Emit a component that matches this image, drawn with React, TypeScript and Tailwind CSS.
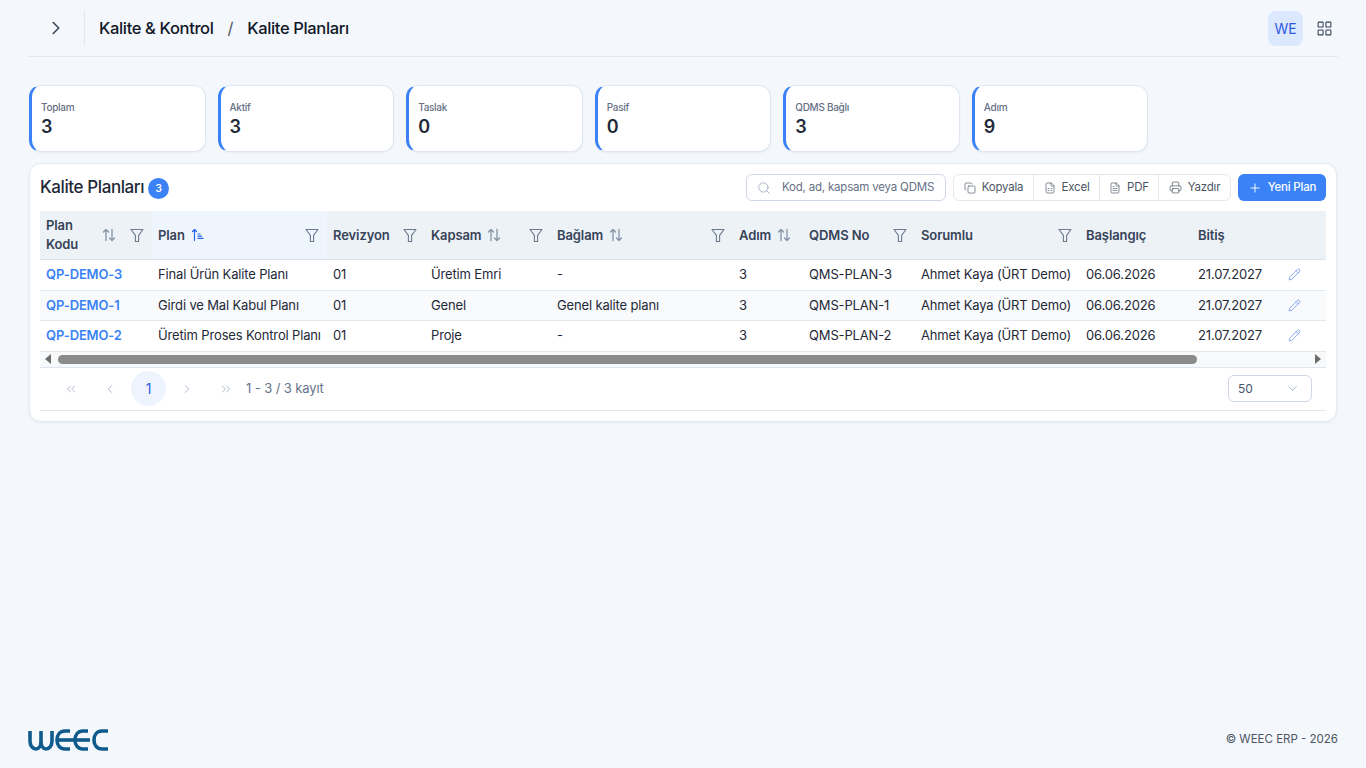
import React from "react";
import { ChevronRight, Copy, FileText, Printer, Plus, Search, ChevronsLeft, ChevronLeft, ChevronsRight, ChevronDown, LayoutGrid, Pencil, Funnel, ArrowUpDown, FileSpreadsheet } from "lucide-react";

const stats = [["Toplam", "3"], ["Aktif", "3"], ["Taslak", "0"], ["Pasif", "0"], ["QDMS Bağlı", "3"], ["Adım", "9"]];
const rows = [
  ["QP-DEMO-3", "Final Ürün Kalite Planı", "01", "Üretim Emri", "-", "3", "QMS-PLAN-3"],
  ["QP-DEMO-1", "Girdi ve Mal Kabul Planı", "01", "Genel", "Genel kalite planı", "3", "QMS-PLAN-1"],
  ["QP-DEMO-2", "Üretim Proses Kontrol Planı", "01", "Proje", "-", "3", "QMS-PLAN-2"],
];

function Sort() {
  return (
    <svg width="14" height="14" viewBox="0 0 14 14" fill="none" stroke="#8492a6" strokeWidth="1.3" strokeLinecap="round" strokeLinejoin="round" className="shrink-0">
      <path d="M4 12.5V1.5M1.5 4 4 1.5 6.5 4" />
      <path d="M10 1.5v11M7.5 10l2.5 2.5 2.5-2.5" />
    </svg>
  );
}
function Filter() {
  return (
    <svg width="14" height="15" viewBox="0 0 14 15" fill="none" stroke="#6b7a8d" strokeWidth="1.1" strokeLinejoin="round" className="shrink-0">
      <path d="M1 1.5h12L8.6 7.4v6.1H5.4V7.4z" />
    </svg>
  );
}
function Th({ w, children, active, filter = true, sort = true, end }: any) {
  return (
    <div className={`shrink-0 flex items-center h-full pl-[6px] pr-[8px] ${active ? "bg-[#eff5fd]" : ""}`} style={{ width: w }}>
      <span className="text-[13px] font-semibold leading-[19px] text-[#374357] tracking-[-0.1px]">{children}</span>
      {sort && !end && <span className="ml-[6px]"><Sort /></span>}
      {end}
      {filter && <span className="ml-auto"><Filter /></span>}
    </div>
  );
}

const widths = [112, 175, 98, 126, 182, 70, 112, 165, 112, 88, 47];

export default function App() {
  return (
    <div className="min-h-[768px] bg-[#f4f7fc] flex flex-col px-[28px] font-['Inter',sans-serif] text-[#1f2937]">
      <header className="h-[57px] border-b border-[#e2e8f0] flex items-center">
        <div className="w-[57px] h-[35px] border-r border-[#e2e8f0] flex items-center justify-center">
          <ChevronRight size={22} strokeWidth={1.7} className="text-[#374357]" />
        </div>
        <div className="ml-[14px] flex items-center text-[16.5px] font-medium text-[#111827] tracking-[-0.35px]">
          <span>Kalite &amp; Kontrol</span>
          <span className="mx-[14px] font-normal text-[#4b5563]">/</span>
          <span>Kalite Planları</span>
        </div>
        <div className="ml-auto flex items-center">
          <div className="w-[35px] h-[35px] rounded-[8px] bg-[#dbe8fe] text-[#2f5be0] text-[14px] flex items-center justify-center">WE</div>
          <div className="w-[28px] ml-[7px] mr-[0px] flex justify-center"><LayoutGrid size={17} strokeWidth={1.5} className="text-[#374357]" /></div>
          <div className="w-[0px]" />
        </div>
      </header>

      <div className="mt-[28px] ml-px mr-px grid grid-cols-7 gap-x-[12px]">
        {stats.map(([l, v]) => (
          <div key={l} className="h-[67px] bg-white rounded-[12px] border border-[#dfe6f2] border-l-[3px] border-l-[#3b82f6] pl-[9px] pt-[14px] shadow-[0_1px_2px_rgba(15,23,42,0.05)]">
            <div className="text-[10px] leading-[14px] font-medium text-[#667085] tracking-[-0.3px]">{l}</div>
            <div className="text-[18px] leading-[24px] mt-[1px] font-semibold text-[#1f2937]">{v}</div>
          </div>
        ))}
      </div>

      <section className="mt-[11px] mx-px h-[259px] bg-white rounded-[12px] border border-[#e6ebf3] shadow-[0_1px_3px_rgba(15,23,42,0.06)] px-[10px] flex flex-col">
        <div className="h-[47px] flex items-center shrink-0">
          <span className="text-[17px] font-medium text-[#1f2937] tracking-[-0.4px]">Kalite Planları</span>
          <span className="ml-[4px] mt-[2px] w-[21px] h-[21px] rounded-full bg-[#3b82f6] text-white text-[10px] font-semibold flex items-center justify-center">3</span>
          <div className="ml-auto flex items-center">
            <div className="w-[200px] h-[27px] border border-[#cfd8e6] rounded-[6px] flex items-center pl-[10px]">
              <Search size={14} strokeWidth={1.3} className="text-[#94a3b8]" />
              <span className="ml-[11px] text-[11.5px] text-[#667085] tracking-[-0.2px]">Kod, ad, kapsam veya QDMS</span>
            </div>
            <div className="ml-[7px] h-[27px] border border-[#e2e8f0] rounded-[6px] flex items-center text-[11.5px] text-[#4b5563] tracking-[-0.2px]">
              <div className="w-[80px] h-full flex items-center justify-center gap-[6px] border-r border-[#e2e8f0]"><Copy size={12} strokeWidth={1.3} />Kopyala</div>
              <div className="w-[66px] h-full flex items-center justify-center gap-[6px] border-r border-[#e2e8f0]"><FileSpreadsheet size={12} strokeWidth={1.3} />Excel</div>
              <div className="w-[59px] h-full flex items-center justify-center gap-[6px] border-r border-[#e2e8f0]"><FileText size={12} strokeWidth={1.3} />PDF</div>
              <div className="w-[71px] h-full flex items-center justify-center gap-[6px]"><Printer size={13} strokeWidth={1.3} />Yazdır</div>
            </div>
            <div className="ml-[7px] w-[88px] h-[27px] rounded-[6px] bg-[#3b82f6] text-white text-[11.5px] font-medium tracking-[-0.2px] flex items-center justify-center gap-[6px]"><Plus size={14} strokeWidth={1.6} />Yeni Plan</div>
          </div>
        </div>

        <div className="h-[49px] bg-[#edf2f7] border-b border-[#dbe3ee] flex items-center shrink-0">
          <Th w={widths[0]}><span className="block w-[50px]">Plan Kodu</span></Th>
          <Th w={widths[1]} sort={false} active end={<svg width="14" height="14" viewBox="0 0 14 14" fill="none" stroke="#2563eb" strokeWidth="1.2" className="ml-[6px]" strokeLinecap="round" strokeLinejoin="round"><path d="M3.5 12.5V1.5M1.5 3.5 3.5 1.5 5.5 3.5" /><path d="M7 6h2M7 8.2h3.5M7 10.4h5" /></svg>}>Plan</Th>
          <Th w={widths[2]} sort={false}>Revizyon</Th>
          <Th w={widths[3]}>Kapsam</Th>
          <Th w={widths[4]}>Bağlam</Th>
          <Th w={widths[5]} filter={false}>Adım</Th>
          <Th w={widths[6]} sort={false}>QDMS No</Th>
          <Th w={widths[7]} sort={false}>Sorumlu</Th>
          <Th w={widths[8]} sort={false} filter={false}>Başlangıç</Th>
          <Th w={widths[9]} sort={false} filter={false}>Bitiş</Th>
        </div>

        {rows.map((r, i) => (
          <div key={r[0]} className={`h-[30.5px] flex items-center shrink-0 border-b border-[#e2e8f0] text-[13px] tracking-[-0.15px] text-[#1f2937] ${i === 1 ? "bg-[#f8fafc]" : ""}`}>
            <div className="pl-[6px] font-semibold text-[#3b82f6]" style={{ width: widths[0] }}>{r[0]}</div>
            {r.slice(1).map((c, j) => (
              <div key={j} className="pl-[6px] whitespace-nowrap" style={{ width: widths[j + 1] }}>{c}</div>
            ))}
            <div className="pl-[6px] whitespace-nowrap" style={{ width: widths[7] }}>Ahmet Kaya (ÜRT Demo)</div>
            <div className="pl-[6px]" style={{ width: widths[8] }}>06.06.2026</div>
            <div className="pl-[6px]" style={{ width: widths[9] }}>21.07.2027</div>
            <div className="pl-[8px]"><Pencil size={13} strokeWidth={1.2} className="text-[#4f7ce8]" /></div>
          </div>
        ))}

        <div className="h-[16px] bg-[#f8f9fb] border-b border-[#dfe5ee] flex items-center shrink-0 relative">
          <svg width="8" height="10" viewBox="0 0 8 10" className="ml-[4px] shrink-0"><path d="M7 0v10L1 5z" fill="#6d6d6d" /></svg>
          <div className="ml-[6px] w-[1139px] h-[9px] rounded-full bg-[#8b8b8b]" />
          <svg width="8" height="10" viewBox="0 0 8 10" className="ml-auto mr-[4px] shrink-0"><path d="M1 0v10l6-5z" fill="#6d6d6d" /></svg>
        </div>

        <div className="h-[43px] border-b border-[#e2e8f0] flex items-center shrink-0 text-[#94a3b8]">
          <div className="ml-[16px] w-[30px] flex justify-center"><ChevronsLeft size={14} strokeWidth={1.3} /></div>
          <div className="ml-[9px] w-[30px] flex justify-center"><ChevronLeft size={14} strokeWidth={1.3} /></div>
          <div className="ml-[6px] w-[35px] h-[35px] rounded-full bg-[#eef4fe] text-[#2f5be0] text-[14px] flex items-center justify-center">1</div>
          <div className="ml-[6px] w-[30px] flex justify-center"><ChevronRight size={14} strokeWidth={1.3} /></div>
          <div className="ml-[9px] w-[30px] flex justify-center"><ChevronsRight size={14} strokeWidth={1.3} /></div>
          <span className="ml-[5px] text-[13px] text-[#64748b] tracking-[-0.1px]">1 - 3 / 3 kayıt</span>
          <div className="ml-auto mr-[14px] w-[84px] h-[27px] border border-[#cfd8e6] rounded-[6px] flex items-center justify-between pl-[9px] pr-[11px]">
            <span className="text-[12px] text-[#475569]">50</span>
            <ChevronDown size={15} strokeWidth={1.3} className="text-[#94a3b8]" />
          </div>
        </div>
      </section>

      <footer className="mt-auto h-[56px] flex items-center justify-between">
        <svg width="84" height="24" viewBox="0 0 84 24" fill="none" stroke="#0e5b8c" strokeWidth="3.6">
          <path d="M2 3v10c0 5 3 8 6 8s5-3 5-8V3M13 13c0 5 2 8 5 8s6-3 6-8V3" />
          <path d="M42 3h-5c-5 0-8 4-8 9s3 9 8 9h5" />
          <path d="M30 12h32" />
          <path d="M60 3h-5c-5 0-8 4-8 9s3 9 8 9h5" />
          <path d="M80 3h-6c-5 0-8 4-8 9s3 9 8 9h6" />
        </svg>
        <span className="text-[11.5px] text-[#4b5563]">© WEEC ERP - 2026</span>
      </footer>
    </div>
  );
}
